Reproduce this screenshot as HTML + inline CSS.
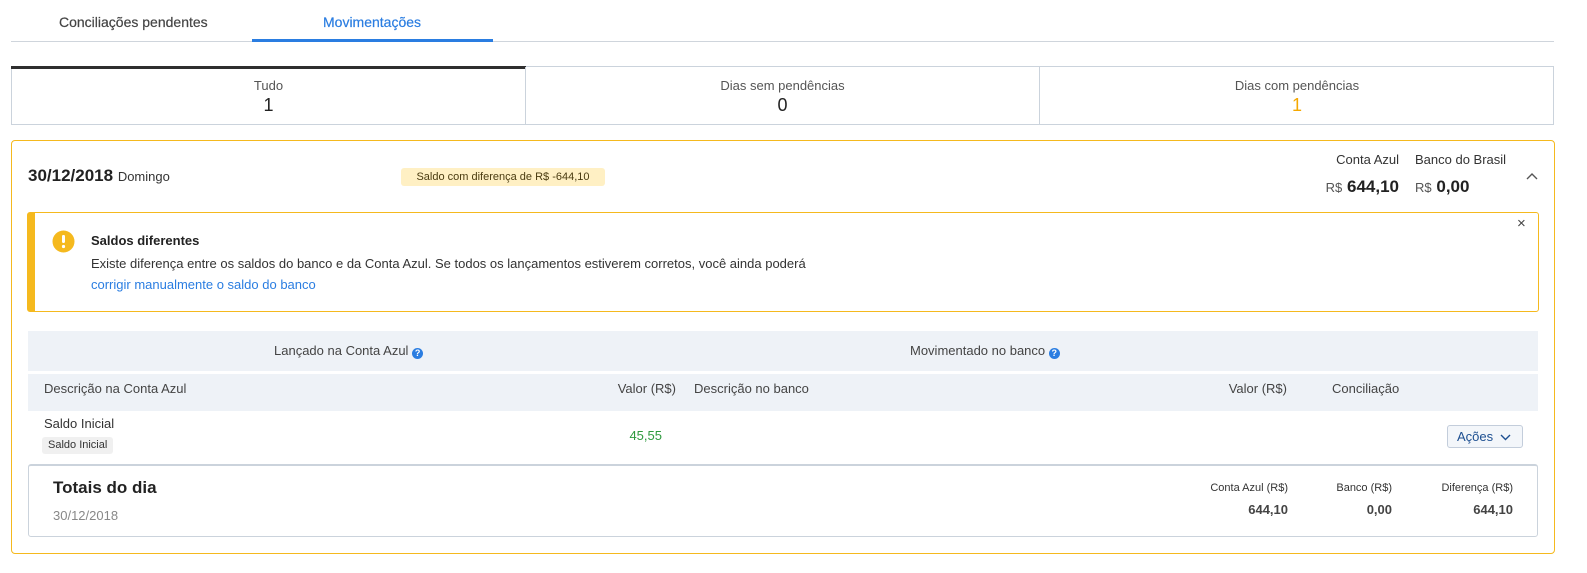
<!DOCTYPE html><html><head><meta charset="utf-8"><style>
*{box-sizing:border-box;margin:0;padding:0}
body{width:1587px;height:573px;background:#fff;font-family:"Liberation Sans",sans-serif;color:#333;position:relative;overflow:hidden;font-size:13px}
.a{position:absolute;white-space:nowrap}
</style></head><body>
<div class="a" style="left:59px;top:14px;font-size:14px;color:#444;-webkit-text-stroke:0.2px #444">Conciliações pendentes</div>
<div class="a" style="left:323px;top:14px;font-size:14px;color:#2a7de1;-webkit-text-stroke:0.2px #2a7de1">Movimentações</div>
<div class="a" style="left:11px;top:41px;width:1543px;height:1px;background:#cfd5dc"></div>
<div class="a" style="left:252px;top:39px;width:241px;height:3px;background:#2a7de1"></div>

<div class="a" style="left:11px;top:66px;width:1543px;height:59px;border:1px solid #cbd3dc"></div>
<div class="a" style="left:11px;top:66px;width:515px;height:3px;background:#2f2f2f"></div>
<div class="a" style="left:525px;top:67px;width:1px;height:57px;background:#cbd3dc"></div>
<div class="a" style="left:1039px;top:67px;width:1px;height:57px;background:#cbd3dc"></div>
<div class="a" style="left:11px;top:78px;width:515px;text-align:center;color:#555">Tudo</div>
<div class="a" style="left:11px;top:95px;width:515px;text-align:center;font-size:18px;color:#222">1</div>
<div class="a" style="left:526px;top:78px;width:513px;text-align:center;color:#555">Dias sem pendências</div>
<div class="a" style="left:526px;top:95px;width:513px;text-align:center;font-size:18px;color:#222">0</div>
<div class="a" style="left:1040px;top:78px;width:514px;text-align:center;color:#555">Dias com pendências</div>
<div class="a" style="left:1040px;top:95px;width:514px;text-align:center;font-size:18px;color:#f5a800">1</div>

<div class="a" style="left:11px;top:140px;width:1544px;height:414px;border:1px solid #f5b91e;border-radius:4px"></div>
<div class="a" style="left:28px;top:166px;font-size:17px;color:#222;font-weight:bold">30/12/2018 <span style="font-size:13px;color:#333;font-weight:normal">Domingo</span></div>
<div class="a" style="left:401px;top:168px;width:204px;height:18px;background:#fff0c4;border-radius:3px;font-size:11px;line-height:18px;text-align:center;color:#4a3b10">Saldo com diferença de R$ -644,10</div>
<div class="a" style="left:1300px;top:152px;width:99px;text-align:right;color:#333">Conta Azul</div>
<div class="a" style="left:1415px;top:152px;color:#333">Banco do Brasil</div>
<div class="a" style="left:1280px;top:177px;width:119px;text-align:right;font-size:17px;color:#222"><span style="font-size:13px;color:#555">R$</span> <b>644,10</b></div>
<div class="a" style="left:1415px;top:177px;font-size:17px;color:#222"><span style="font-size:13px;color:#555">R$</span> <b>0,00</b></div>
<svg class="a" style="left:1526px;top:172px" width="12" height="8"><path d="M1 7L6 2L11 7" stroke="#555" stroke-width="1.4" fill="none"/></svg>

<div class="a" style="left:27px;top:212px;width:1512px;height:100px;border:1px solid #f5b91e;border-left:8px solid #f5b91e;border-radius:3px"></div>
<svg class="a" style="left:52px;top:230px" width="23" height="23"><circle cx="11.5" cy="11.5" r="11" fill="#f5b91e"/><rect x="10" y="5" width="3" height="8" rx="1.2" fill="#fff"/><circle cx="11.5" cy="16.5" r="1.6" fill="#fff"/></svg>
<div class="a" style="left:91px;top:233px;font-weight:bold;color:#222">Saldos diferentes</div>
<div class="a" style="left:91px;top:256px;color:#333">Existe diferença entre os saldos do banco e da Conta Azul. Se todos os lançamentos estiverem corretos, você ainda poderá</div>
<div class="a" style="left:91px;top:277px;color:#2a7de1">corrigir manualmente o saldo do banco</div>
<div class="a" style="left:1517px;top:215px;font-size:15px;color:#444">×</div>

<div class="a" style="left:28px;top:331px;width:1510px;height:40px;background:#eef2f7"></div>
<div class="a" style="left:28px;top:374px;width:1510px;height:37px;background:#eef2f7"></div>
<div class="a" style="left:274px;top:343px;color:#444">Lançado na Conta Azul <span style="display:inline-block;width:11px;height:11px;border-radius:50%;background:#2a7de1;color:#fff;font-size:9px;line-height:11px;text-align:center;font-weight:bold;vertical-align:-1px">?</span></div>
<div class="a" style="left:910px;top:343px;color:#444">Movimentado no banco <span style="display:inline-block;width:11px;height:11px;border-radius:50%;background:#2a7de1;color:#fff;font-size:9px;line-height:11px;text-align:center;font-weight:bold;vertical-align:-1px">?</span></div>
<div class="a" style="left:44px;top:381px;color:#444">Descrição na Conta Azul</div>
<div class="a" style="left:560px;top:381px;width:116px;text-align:right;color:#444">Valor (R$)</div>
<div class="a" style="left:694px;top:381px;color:#444">Descrição no banco</div>
<div class="a" style="left:1180px;top:381px;width:107px;text-align:right;color:#444">Valor (R$)</div>
<div class="a" style="left:1332px;top:381px;color:#444">Conciliação</div>

<div class="a" style="left:44px;top:416px;color:#333">Saldo Inicial</div>
<div class="a" style="left:42px;top:437px;height:17px;padding:0 6px;background:#f0f0f0;border-radius:3px;font-size:11px;line-height:17px;color:#333">Saldo Inicial</div>
<div class="a" style="left:560px;top:428px;width:102px;text-align:right;color:#2e9a3e">45,55</div>
<div class="a" style="left:1447px;top:425px;width:76px;height:23px;border:1px solid #c3cddb;border-radius:3px;background:#f3f6fa;color:#1d4f91;line-height:21px;padding-left:9px">Ações <svg width="11" height="7" style="margin-left:3px"><path d="M1 1L5.5 5.5L10 1" stroke="#1d4f91" stroke-width="1.4" fill="none"/></svg></div>

<div class="a" style="left:28px;top:464px;width:1510px;height:73px;border:1px solid #cbd3dc;border-top:2px solid #cbd3dc;border-radius:3px"></div>
<div class="a" style="left:53px;top:478px;font-size:17px;font-weight:bold;color:#222">Totais do dia</div>
<div class="a" style="left:53px;top:508px;color:#888">30/12/2018</div>
<div class="a" style="left:1180px;top:482px;width:108px;text-align:right;font-size:11px;color:#333">Conta Azul (R$)</div>
<div class="a" style="left:1300px;top:482px;width:92px;text-align:right;font-size:11px;color:#333">Banco (R$)</div>
<div class="a" style="left:1410px;top:482px;width:103px;text-align:right;font-size:11px;color:#333">Diferença (R$)</div>
<div class="a" style="left:1180px;top:502px;width:108px;text-align:right;font-weight:bold;color:#444">644,10</div>
<div class="a" style="left:1300px;top:502px;width:92px;text-align:right;font-weight:bold;color:#444">0,00</div>
<div class="a" style="left:1410px;top:502px;width:103px;text-align:right;font-weight:bold;color:#444">644,10</div>
</body></html>
